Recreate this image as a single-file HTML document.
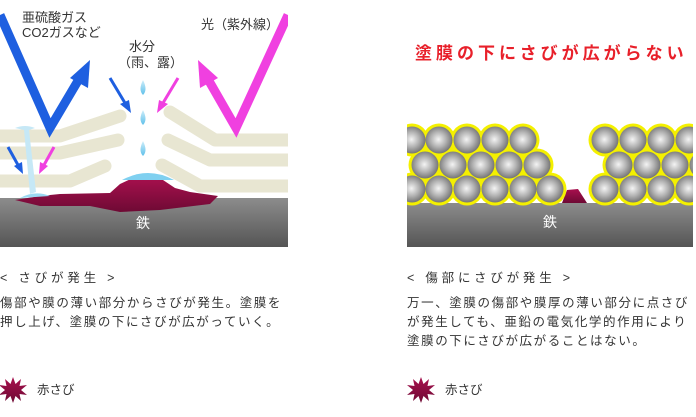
<!DOCTYPE html>
<html><head><meta charset="utf-8"><style>
html,body{margin:0;padding:0;background:#fff;width:696px;height:417px;overflow:hidden;position:relative}
body{font-family:"Liberation Sans","Noto Sans CJK JP",sans-serif;color:#333}
.t{position:absolute;white-space:nowrap;font-size:12.5px;letter-spacing:1.6px;line-height:19px}
</style></head><body>
<svg width="696" height="417" style="position:absolute;left:0;top:0">
<defs>
<linearGradient id="st" x1="0" y1="0" x2="0" y2="1"><stop offset="0" stop-color="#8c8c8c"/><stop offset="1" stop-color="#555"/></linearGradient>
<radialGradient id="ball" cx="0.48" cy="0.48" r="0.55"><stop offset="0" stop-color="#f4f4f4"/><stop offset="0.5" stop-color="#b4b4b4"/><stop offset="1" stop-color="#6e6e6e"/></radialGradient>
<linearGradient id="rust" x1="0" y1="0" x2="0" y2="1"><stop offset="0" stop-color="#a8104e"/><stop offset="1" stop-color="#6e0a34"/></linearGradient>
<linearGradient id="drop" x1="0" y1="0" x2="0" y2="1"><stop offset="0" stop-color="#cfeefa"/><stop offset="1" stop-color="#5fc0ea"/></linearGradient>
<clipPath id="lc"><rect x="0" y="0" width="288" height="247"/></clipPath>
</defs>
<!-- LEFT -->
<g clip-path="url(#lc)">
<rect x="0" y="198" width="288" height="49" fill="url(#st)"/>
<g stroke="#e8e6d2" stroke-width="13" fill="none" stroke-linejoin="round" stroke-linecap="round">
<polyline points="-5,136 60,136 120,116"/>
<polyline points="-5,153 60,153 118,140"/>
<polyline points="-5,181 70,181 105,166"/>
<polyline points="170,112 215,140 295,140"/>
<polyline points="168,140 210,160 295,160"/>
<polyline points="162,165 200,186 295,186"/>
</g>
<path d="M15,200 L40,196 L60,194 L110,193 L120,184 L135,177 L160,178 L175,188 L190,192 L218,196 L210,204 L160,210 L120,212 L90,206 L40,206 Z" fill="url(#rust)"/>
<path d="M122,180 Q148,166 174,180 Z" fill="#7fd0f0"/>
<path d="M20,198 Q35,190 50,196 Z" fill="#9ad8f2"/>
<path d="M15,128 Q25,124 35,128 L29,130 L36,192 L30,194 L24,130 Z" fill="#c6e8f6"/>
<g fill="url(#drop)">
<path d="M143,80 Q148,90 143,95 Q138,90 143,80Z"/>
<path d="M143,110 Q148,120 143,125 Q138,120 143,110Z"/>
<path d="M143,141 Q148,151 143,156 Q138,151 143,141Z"/>
</g>
<g fill="none" stroke-width="9" stroke-linejoin="miter">
<polyline points="0,15 50,128 82,74" stroke="#1e5fe0"/>
<polyline points="288,15 236,128 205,74" stroke="#f040e0"/>
</g>
<polygon points="90,60 88,88 70,78" fill="#1e5fe0"/>
<polygon points="198,60 200,88 218,78" fill="#f040e0"/>
<g stroke-width="3">
<line x1="110" y1="78" x2="125" y2="103" stroke="#1e5fe0"/><polygon points="131,113 120,104 129,100" fill="#1e5fe0"/>
<line x1="178" y1="78" x2="163" y2="103" stroke="#f040e0"/><polygon points="157,113 168,104 159,100" fill="#f040e0"/>
<line x1="8" y1="147" x2="18" y2="165" stroke="#1e5fe0"/><polygon points="23,174 14,166 22,162" fill="#1e5fe0"/>
<line x1="54" y1="147" x2="44" y2="165" stroke="#f040e0"/><polygon points="39,174 48,166 40,162" fill="#f040e0"/>
</g>
</g>
<!-- RIGHT -->
<rect x="407" y="203" width="286" height="44" fill="url(#st)"/>
<path d="M562,203 L567,190 L578,189 L587,203 Z" fill="url(#rust)"/>
<g id="yel" fill="#f4f000">
<circle cx="412" cy="140" r="16.5"/><circle cx="439" cy="140" r="16.5"/><circle cx="467" cy="140" r="16.5"/><circle cx="495" cy="140" r="16.5"/><circle cx="523" cy="140" r="16.5"/>
<circle cx="425" cy="165" r="16.5"/><circle cx="453" cy="165" r="16.5"/><circle cx="481" cy="165" r="16.5"/><circle cx="509" cy="165" r="16.5"/><circle cx="537" cy="165" r="16.5"/>
<circle cx="412" cy="189" r="16.5"/><circle cx="439" cy="189" r="16.5"/><circle cx="467" cy="189" r="16.5"/><circle cx="495" cy="189" r="16.5"/><circle cx="523" cy="189" r="16.5"/><circle cx="550" cy="189" r="16.5"/>
<circle cx="605" cy="140" r="16.5"/><circle cx="633" cy="140" r="16.5"/><circle cx="661" cy="140" r="16.5"/><circle cx="689" cy="140" r="16.5"/>
<circle cx="619" cy="165" r="16.5"/><circle cx="647" cy="165" r="16.5"/><circle cx="675" cy="165" r="16.5"/><circle cx="703" cy="165" r="16.5"/>
<circle cx="605" cy="189" r="16.5"/><circle cx="633" cy="189" r="16.5"/><circle cx="661" cy="189" r="16.5"/><circle cx="689" cy="189" r="16.5"/>
</g>
<rect x="400" y="190" width="300" height="13" fill="url(#st)" opacity="0"/>
<g fill="url(#ball)">
<circle cx="412" cy="140" r="13.5"/><circle cx="439" cy="140" r="13.5"/><circle cx="467" cy="140" r="13.5"/><circle cx="495" cy="140" r="13.5"/><circle cx="523" cy="140" r="13.5"/>
<circle cx="425" cy="165" r="13.5"/><circle cx="453" cy="165" r="13.5"/><circle cx="481" cy="165" r="13.5"/><circle cx="509" cy="165" r="13.5"/><circle cx="537" cy="165" r="13.5"/>
<circle cx="412" cy="189" r="13.5"/><circle cx="439" cy="189" r="13.5"/><circle cx="467" cy="189" r="13.5"/><circle cx="495" cy="189" r="13.5"/><circle cx="523" cy="189" r="13.5"/><circle cx="550" cy="189" r="13.5"/>
<circle cx="605" cy="140" r="13.5"/><circle cx="633" cy="140" r="13.5"/><circle cx="661" cy="140" r="13.5"/><circle cx="689" cy="140" r="13.5"/>
<circle cx="619" cy="165" r="13.5"/><circle cx="647" cy="165" r="13.5"/><circle cx="675" cy="165" r="13.5"/><circle cx="703" cy="165" r="13.5"/>
<circle cx="605" cy="189" r="13.5"/><circle cx="633" cy="189" r="13.5"/><circle cx="661" cy="189" r="13.5"/><circle cx="689" cy="189" r="13.5"/>
</g>
<rect x="693" y="100" width="4" height="150" fill="#fff"/>
<rect x="395" y="100" width="12" height="150" fill="#fff"/>
<!-- stars -->
<g fill="url(#rust)">
<polygon id="sr" points="13,377 15.5,384 21,379 19.5,386 27,385 21,390 27,395 19.5,394 21,401 15.5,396 13,403 10.5,396 5,401 6.5,394 -1,395 5,390 -1,385 6.5,386 5,379 10.5,384"/>
<use href="#sr" x="408"/>
</g>
</svg>
<div class="t" style="left:22px;top:8px;font-size:13px;letter-spacing:0">亜硫酸ガス</div>
<div class="t" style="left:22px;top:23px;font-size:13px;letter-spacing:0">CO2ガスなど</div>
<div class="t" style="left:129px;top:37px;font-size:13px;letter-spacing:0">水分</div>
<div class="t" style="left:118px;top:53px;font-size:13px;letter-spacing:0">（雨、露）</div>
<div class="t" style="left:201px;top:15px;font-size:13px;letter-spacing:0">光（紫外線）</div>
<div class="t" style="left:136px;top:214px;font-size:14px;color:#fff;letter-spacing:0">鉄</div>
<div class="t" style="left:543px;top:213px;font-size:14px;color:#fff;letter-spacing:0">鉄</div>
<div class="t" style="left:415px;top:43px;font-size:17px;font-weight:bold;color:#e8202a;letter-spacing:4px;line-height:22px">塗膜の下にさびが広がらない</div>
<div class="t" style="left:0;top:269px;letter-spacing:3.8px">&lt; さびが発生 &gt;</div>
<div class="t" style="left:0;top:294px">傷部や膜の薄い部分からさびが発生。塗膜を<br>押し上げ、塗膜の下にさびが広がっていく。</div>
<div class="t" style="left:407px;top:269px;letter-spacing:3.8px">&lt; 傷部にさびが発生 &gt;</div>
<div class="t" style="left:407px;top:294px">万一、塗膜の傷部や膜厚の薄い部分に点さび<br>が発生しても、亜鉛の電気化学的作用により<br>塗膜の下にさびが広がることはない。</div>
<div class="t" style="left:37px;top:381px;letter-spacing:0">赤さび</div>
<div class="t" style="left:445px;top:381px;letter-spacing:0">赤さび</div>
</body></html>
